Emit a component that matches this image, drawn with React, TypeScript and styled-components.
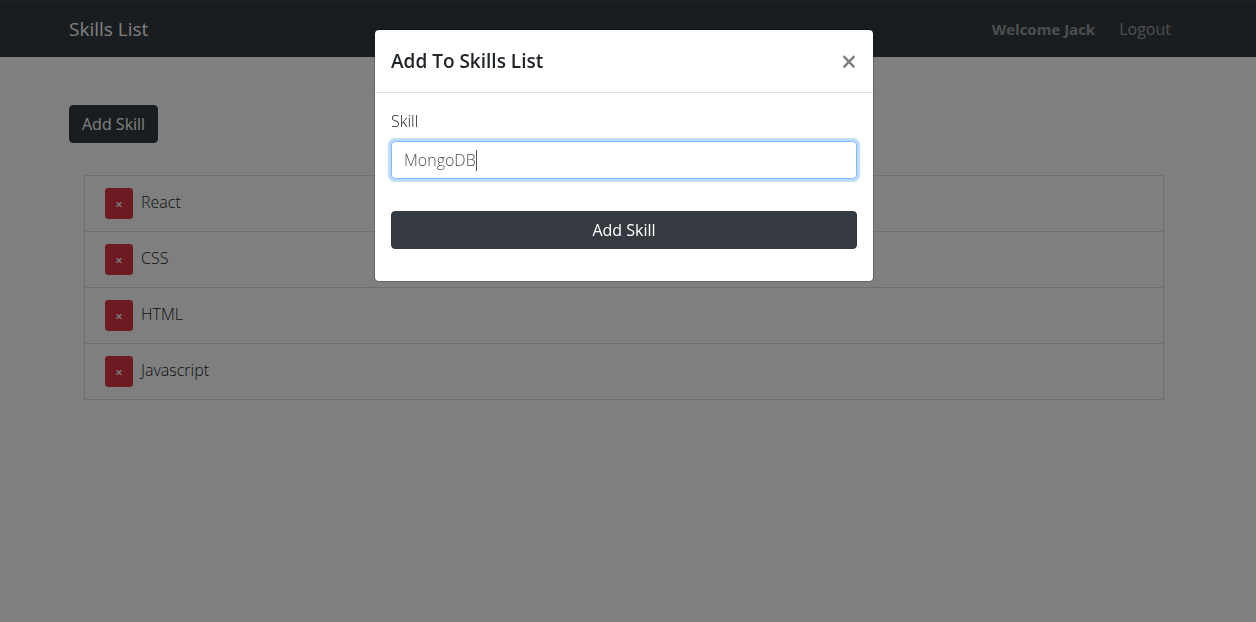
import React, { useState } from "react";
import styled, { createGlobalStyle } from "styled-components";

const GlobalStyle = createGlobalStyle`
  *, *::before, *::after { box-sizing: border-box; }
  body {
    margin: 0;
    background: #fff;
    color: #212529;
    font-family: "Segoe UI", "Open Sans", "Noto Sans", sans-serif;
    font-size: 16px;
    font-weight: 300;
    line-height: 24px;
  }
  button, input { font: inherit; }
`;

const Page = styled.div`
  padding-top: 1px;
  background: #fff;
`;

const Container = styled.div`
  width: 100%;
  max-width: 1140px;
  margin: 0 auto;
  padding: 0 15px;
`;

const Gutter = styled.div`
  padding-right: 8px;
`;

const Navbar = styled.nav`
  padding: 8px 0;
  margin-bottom: 48px;
  background: #343a40;
  box-shadow: 0 -1px 0 #424242;
`;

const NavRow = styled(Container)`
  display: flex;
  align-items: center;
  justify-content: space-between;
`;

const Brand = styled.a`
  color: #fff;
  font-size: 19px;
  font-weight: 400;
  line-height: 30px;
  text-decoration: none;
`;

const NavList = styled.ul`
  display: flex;
  gap: 8px;
  margin: 0;
  padding: 0;
  list-style: none;
  font-weight: 400;
`;

const NavItem = styled.li`
  padding: 8px;
  color: rgba(255, 255, 255, 0.5);
`;

const UserName = styled.strong`
  font-size: 15px;
  font-weight: 700;
`;

const NavLink = styled.a`
  color: inherit;
  text-decoration: none;
`;

const Button = styled.button<{ $block?: boolean }>`
  display: block;
  width: ${(p) => (p.$block ? "100%" : "auto")};
  height: 38px;
  padding: 6px 12px;
  border: 1px solid #343a40;
  border-radius: 4px;
  background: #343a40;
  color: #fff;
  font-weight: 400;
  cursor: pointer;
`;

const SkillList = styled.ul`
  margin: 32px 15px 0;
  padding: 0;
  list-style: none;
  border: 1px solid rgba(0, 0, 0, 0.125);
`;

const SkillItem = styled.li`
  display: flex;
  gap: 8px;
  padding: 12px 20px;
  & + & { border-top: 1px solid rgba(0, 0, 0, 0.125); }
`;

const SkillName = styled.span`
  line-height: 28px;
`;

const RemoveButton = styled.button`
  width: 28px;
  height: 31px;
  padding: 4px 0;
  border: 1px solid #dc3545;
  border-radius: 3px;
  background: #dc3545;
  color: #fff;
  font-size: 13px;
  font-weight: 600;
  line-height: 22px;
  cursor: pointer;
`;

const Backdrop = styled.div`
  position: fixed;
  inset: 0;
  padding: 29px 8px 0 0;
  background: rgba(0, 0, 0, 0.5);
`;

const Dialog = styled.div`
  width: 100%;
  max-width: 500px;
  margin: 0 auto;
  border: 1px solid rgba(0, 0, 0, 0.2);
  border-radius: 5px;
  background: #fff;
  background-clip: padding-box;
`;

const DialogHeader = styled.header`
  display: flex;
  align-items: center;
  justify-content: space-between;
  padding: 16px;
  border-bottom: 1px solid #dee2e6;
`;

const DialogTitle = styled.h5`
  margin: 0;
  font-size: 19px;
  font-weight: 600;
  line-height: 30px;
`;

const CloseButton = styled.button`
  margin: -16px -16px -16px auto;
  padding: 16px;
  border: 0;
  background: transparent;
  color: #000;
  font-size: 28px;
  font-weight: 600;
  line-height: 24px;
  opacity: 0.5;
  cursor: pointer;
`;

const Form = styled.form`
  padding: 16px 16px 32px;
`;

const Label = styled.label`
  display: block;
  margin-bottom: 8px;
`;

const Field = styled.div`
  position: relative;
  margin-bottom: 32px;
`;

const TextInput = styled.input`
  display: block;
  width: 100%;
  height: 38px;
  padding: 6px 12px;
  border: 1px solid #80bdff;
  border-radius: 4px;
  outline: 0;
  background: #fff;
  color: #495057;
  caret-color: transparent;
  box-shadow: 0 0 0 3px rgba(0, 123, 255, 0.25);
`;

const Caret = styled.span`
  position: absolute;
  top: 9px;
  left: 85px;
  width: 1px;
  height: 21px;
  background: #495057;
`;

const skills = ["React", "CSS", "HTML", "Javascript"];

export default function App() {
  const [name, setName] = useState("MongoDB");
  return (
    <>
      <GlobalStyle />
      <Page>
        <Navbar>
          <Gutter>
            <NavRow>
              <Brand href="#">Skills List</Brand>
              <NavList>
                <NavItem><UserName>Welcome Jack</UserName></NavItem>
                <NavItem><NavLink href="#">Logout</NavLink></NavItem>
              </NavList>
            </NavRow>
          </Gutter>
        </Navbar>
        <Gutter>
          <Container>
            <Button type="button">Add Skill</Button>
            <SkillList>
              {skills.map((skill) => (
                <SkillItem key={skill}>
                  <RemoveButton type="button" aria-label={`Remove ${skill}`}>×</RemoveButton>
                  <SkillName>{skill}</SkillName>
                </SkillItem>
              ))}
            </SkillList>
          </Container>
        </Gutter>
      </Page>
      <Backdrop>
        <Dialog role="dialog" aria-labelledby="dialog-title">
          <DialogHeader>
            <DialogTitle id="dialog-title">Add To Skills List</DialogTitle>
            <CloseButton type="button" aria-label="Close">×</CloseButton>
          </DialogHeader>
          <Form onSubmit={(e: React.FormEvent) => e.preventDefault()}>
            <Label htmlFor="skill">Skill</Label>
            <Field>
              <TextInput
                id="skill"
                type="text"
                value={name}
                onChange={(e: React.ChangeEvent<HTMLInputElement>) => setName(e.target.value)}
              />
              <Caret />
            </Field>
            <Button type="submit" $block>Add Skill</Button>
          </Form>
        </Dialog>
      </Backdrop>
    </>
  );
}
